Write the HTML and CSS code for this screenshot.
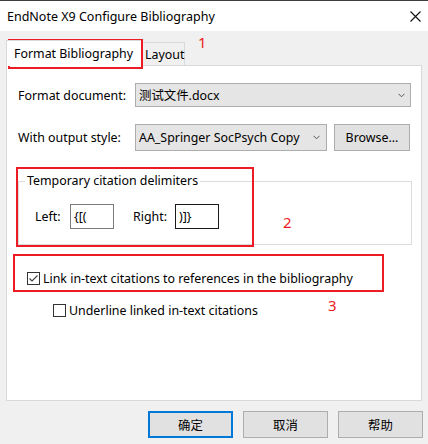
FILE: index.html
```html
<!DOCTYPE html>
<html>
<head>
<meta charset="utf-8">
<link rel="stylesheet" href="styles.css">
</head>
<body>
<div class="window">
  <div class="titlebar">
    <span class="title">EndNote X9 Configure Bibliography</span>
    <svg class="close" width="11" height="11" viewBox="0 0 11 11"><path d="M0.5 0.5 L10.5 10.5 M10.5 0.5 L0.5 10.5" stroke="#111" stroke-width="1.1" fill="none"/></svg>
  </div>
  <div class="tabs">
    <div class="tab active">Format Bibliography</div>
    <div class="tab">Layout</div>
  </div>
  <div class="panel">
    <div class="row r1">
      <span class="lbl">Format document:</span>
      <div class="combo wide"><span class="val">测试文件.docx</span><svg width="7" height="5" viewBox="0 0 7 5"><path d="M0.5 0.8 L3.5 3.8 L6.5 0.8" stroke="#555" fill="none"/></svg></div>
    </div>
    <div class="row r2">
      <span class="lbl">With output style:</span>
      <div class="combo narrow"><span class="val">AA_Springer SocPsych Copy</span><svg width="7" height="5" viewBox="0 0 7 5"><path d="M0.5 0.8 L3.5 3.8 L6.5 0.8" stroke="#555" fill="none"/></svg></div>
      <span class="btn browse">Browse...</span>
    </div>
    <fieldset class="group">
      <legend>Temporary citation delimiters</legend>
      <div class="delims">
        <span class="dl left-l">Left:</span><span class="input">{[(</span>
        <span class="dl right-l">Right:</span><span class="input focus">)]}</span>
      </div>
    </fieldset>
    <div class="check-row first">
      <span class="cb"><svg width="11" height="11" viewBox="0 0 11 11"><path d="M1.5 5.5 L4 8 L9.5 2.5" stroke="#444" stroke-width="1.2" fill="none"/></svg></span>
      <span>Link in-text citations to references in the bibliography</span>
    </div>
    <div class="check-row sub">
      <span class="cb"></span>
      <span>Underline linked in-text citations</span>
    </div>
  </div>
  <div class="actions">
    <span class="btn act default">确定</span>
    <span class="btn act">取消</span>
    <span class="btn act">帮助</span>
  </div>
  <div class="mark m1"></div>
  <div class="mark m2"></div>
  <div class="mark m3"></div>
  <span class="num n1">1</span>
  <span class="num n2">2</span>
  <span class="num n3">3</span>
</div>
</body>
</html>
```
FILE: styles.css
```css
* { box-sizing: border-box; }
body {
  margin: 0;
  width: 428px;
  height: 444px;
  overflow: hidden;
  background: #f0f0f0;
  font-family: "Noto Sans", "Noto Sans CJK SC", sans-serif;
  font-size: 12.4px;
  color: #000;
}
.window { position: relative; height: 444px; }
.titlebar {
  height: 31px;
  border-top: 1px solid #3c3c3c;
  background: #fff;
  display: flex;
  align-items: center;
  justify-content: space-between;
  padding: 0 7px;
}
.title { font-size: 12.5px; }
.close { display: block; }
.tabs {
  display: flex;
  align-items: flex-end;
  height: 25px;
  margin-top: 9px;
  padding-left: 6px;
}
.tab {
  height: 23px;
  border: 1px solid #d9d9d9;
  border-bottom: none;
  padding: 0 3px;
  display: flex;
  align-items: center;
  background: #f0f0f0;
  width: 44px;
}
.tab.active {
  height: 26px;
  width: 135px;
  padding-left: 7px;
  background: #fff;
  margin-bottom: -1px;
  position: relative;
  z-index: 1;
  border-right: none;
}
.panel {
  margin: 0 6px;
  height: 336px;
  border: 1px solid #d9d9d9;
  background: #fff;
  padding: 17px 10px 0 11px;
}
.row { display: flex; align-items: stretch; }
.r1 { height: 24px; }
.r2 { height: 27px; margin-top: 17px; }
.lbl { width: 117px; display: flex; align-items: center; }
.combo {
  border: 1px solid #adadad;
  background: #e5e5e5;
  display: flex;
  align-items: center;
  justify-content: space-between;
  padding-left: 3px;
}
.combo svg { display: block; }
.wide { flex: 1; padding-right: 5px; }
.narrow { width: 192px; padding-right: 6px; }
.btn {
  border: 1px solid #adadad;
  background: #e1e1e1;
  display: flex;
  align-items: center;
  justify-content: center;
}
.browse { width: 76px; margin-left: 7px; }
.group {
  margin: 22px -1px 0 0;
  padding: 0 0 15px 0;
  border: 1px solid #dcdcdc;
  min-width: 0;
}
.group legend {
  margin-left: 6px;
  padding: 0 2px;
  line-height: 16px;
  height: 16px;
}
.delims {
  display: flex;
  align-items: center;
  margin-top: 15px;
  padding-left: 16px;
  height: 25px;
}
.dl { display: block; }
.left-l { width: 35px; }
.right-l { width: 42px; margin-left: 19px; }
.input {
  width: 44px;
  height: 25px;
  border: 1px solid #7a7a7a;
  display: flex;
  align-items: center;
  padding-left: 3px;
}
.input.focus { border-color: #1a1a1a; }
.check-row {
  display: flex;
  align-items: center;
  height: 17px;
}
.check-row.first { margin-top: 25px; padding-left: 9px; }
.check-row.sub { margin-top: 15px; padding-left: 35px; }
.cb {
  width: 13px;
  height: 13px;
  border: 1px solid #333;
  background: #fff;
  margin-right: 3px;
  flex: none;
}
.cb svg { display: block; }
.actions {
  display: flex;
  justify-content: flex-end;
  gap: 10px;
  margin-top: 10px;
  padding-right: 5px;
}
.act { width: 85px; height: 27px; }
.act.default { border: 2px solid #0078d7; }
.mark { position: absolute; border: 2px solid #ed1c24; }
.m1 { left: 8px; top: 39px; width: 135px; height: 30px; }
.m2 { left: 16px; top: 167px; width: 238px; height: 80px; }
.m3 { left: 13px; top: 254px; width: 371px; height: 38px; }
.num {
  position: absolute;
  color: #ed1c24;
  font-size: 15px;
  line-height: 15px;
}
.n1 { left: 198px; top: 35px; }
.n2 { left: 283px; top: 215px; }
.n3 { left: 328px; top: 298px; }
```
